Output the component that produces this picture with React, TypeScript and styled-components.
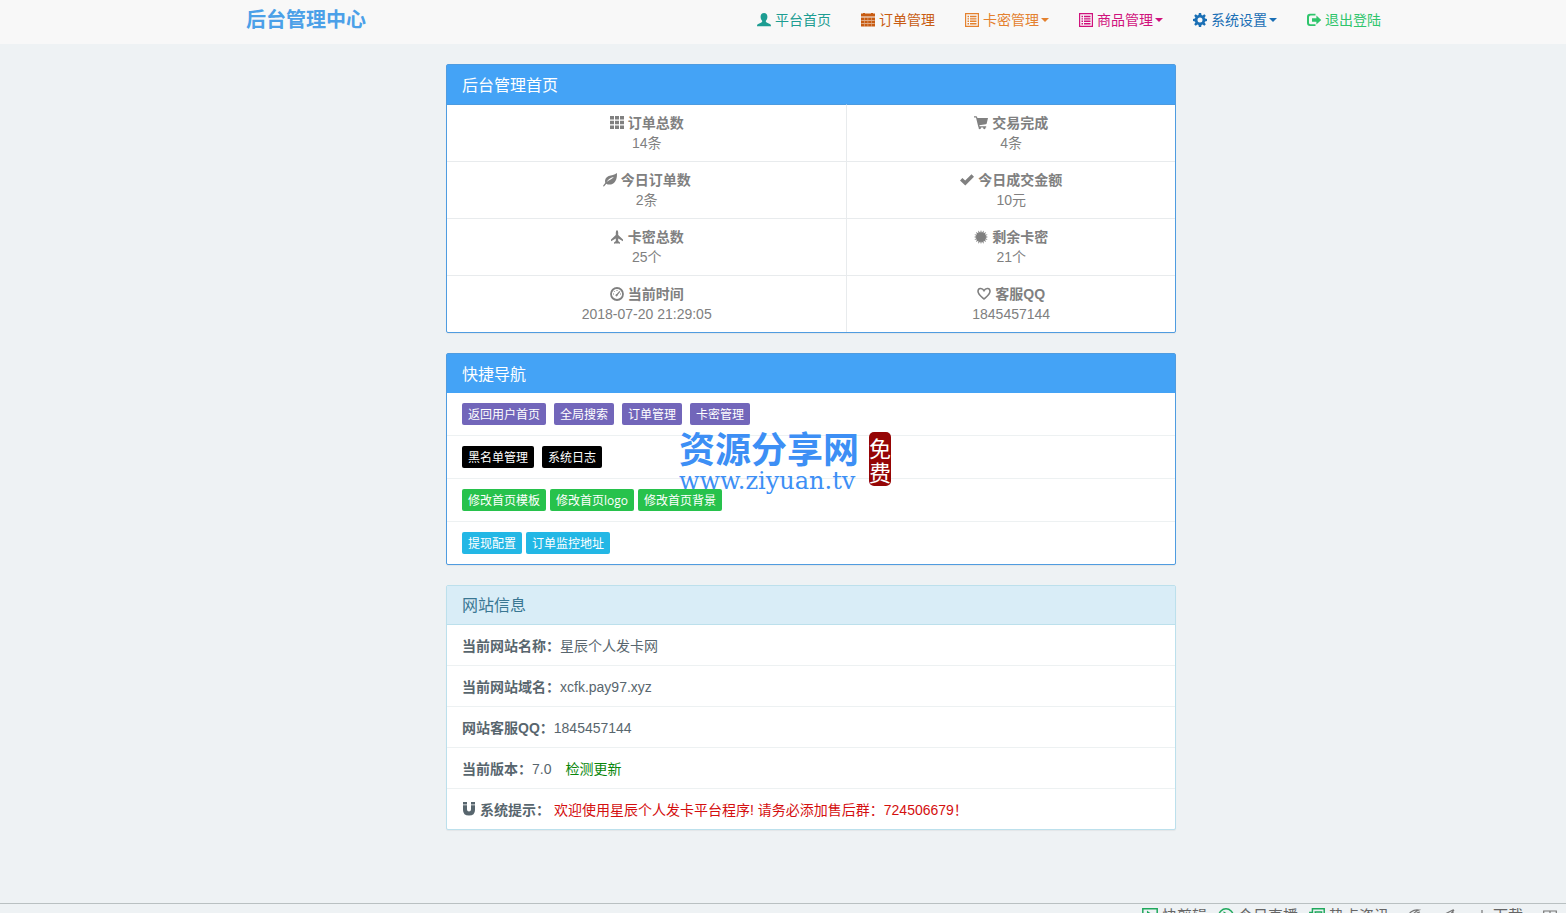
import React from "react";
import styled, { createGlobalStyle } from "styled-components";

const GlobalStyle = createGlobalStyle`
  *, *::before, *::after { box-sizing: border-box; }
  body {
    margin: 0;
    background: #eef2f4;
    color: #58666e;
    font: 14px/20px "Liberation Sans", "Noto Sans CJK SC", sans-serif;
  }
  a { text-decoration: none; }
`;

const Page = styled.div`
  display: flex;
  flex-direction: column;
  min-height: 100vh;
`;

const NavBar = styled.header`
  height: 44px;
  padding-left: 56px;
  background: #f8f8f8;
`;

const NavInner = styled.div`
  display: flex;
  justify-content: space-between;
  max-width: 1170px;
  margin: 0 auto;
  padding: 10px 0 14px 20px;
`;

const Brand = styled.a`
  color: #4ba0e8;
  font-size: 20px;
  font-weight: 700;
`;

const NavMenu = styled.nav`
  display: flex;
`;

const NavLink = styled.a<{ $color: string }>`
  display: inline-flex;
  align-items: center;
  gap: 4px;
  padding: 0 15px;
  color: ${(p) => p.$color};
`;

const NavToggle = styled.button<{ $color: string }>`
  display: inline-flex;
  align-items: center;
  gap: 4px;
  padding: 0 15px;
  border: 0;
  background: none;
  color: ${(p) => p.$color};
  font: inherit;
  cursor: pointer;

  &::after {
    content: "";
    margin-left: -2px;
    border: 4px solid transparent;
    border-top-color: currentColor;
    border-bottom: 0;
  }
`;

const Main = styled.main`
  flex: 1;
  padding: 20px 0 0 56px;
`;

const Column = styled.div`
  max-width: 730px;
  margin: 0 auto;
`;

const Panel = styled.section<{ $tone: "primary" | "info" }>`
  position: relative;
  margin-bottom: 20px;
  border: 1px solid ${(p) => (p.$tone === "primary" ? "#4f9ce0" : "#bce0ec")};
  border-radius: 2px;
  background: #fff;
  box-shadow: 0 1px 1px rgba(0, 0, 0, 0.05);
`;

const PanelTitle = styled.h3<{ $tone: "primary" | "info" }>`
  margin: 0;
  padding: ${(p) => (p.$tone === "primary" ? "12px 15px 8px" : "11px 15px 9px")};
  border-bottom: 1px solid ${(p) => (p.$tone === "primary" ? "#44a3f6" : "#bce0ec")};
  background: ${(p) => (p.$tone === "primary" ? "#44a3f6" : "#d9edf7")};
  color: ${(p) => (p.$tone === "primary" ? "#fff" : "#3a7793")};
  font-size: 16px;
  font-weight: 400;
  line-height: 18px;
`;

const StatTable = styled.table`
  width: 100%;
  border-collapse: separate;
  border-spacing: 0;
  color: #808080;
  text-align: center;

  tr:first-child td { border-top-color: #4c9be0; }
`;

const StatCell = styled.td`
  padding: 8px;
  border-top: 1px solid #e8ebed;

  &:first-child {
    width: 55%;
    border-right: 1px solid #e8ebed;
  }
`;

const StatName = styled.strong`
  display: flex;
  align-items: center;
  justify-content: center;
  gap: 4px;
`;

const List = styled.ul`
  margin: 0;
  padding: 0;
  list-style: none;
`;

const TagRow = styled.li<{ $gap: number }>`
  display: flex;
  flex-wrap: wrap;
  gap: ${(p) => p.$gap}px;
  padding: 10px 15px;

  & + & { border-top: 1px solid #edf1f2; }
`;

const Tag = styled.a<{ $color: string }>`
  padding: 2px 6px 0;
  border-radius: 2px;
  background: ${(p) => p.$color};
  color: #fff;
  font: 12px/20px "Open Sans", "Noto Sans CJK SC", sans-serif;
`;

const InfoRow = styled.li`
  padding: 11px 15px 9px;

  & + & { border-top: 1px solid #edf1f2; }
`;

const InfoName = styled.strong`
  svg { margin-right: 4px; vertical-align: -1px; }
`;

const UpdateLink = styled.a`
  margin-left: 14px;
  color: #0a860a;
`;

const Notice = styled.span`
  margin-left: 4px;
  color: #d40f0f;
`;

const Watermark = styled.div`
  position: absolute;
  top: 71px;
  left: 232px;
  display: flex;
  align-items: center;
  gap: 10px;
  color: #3d8ff5;
  pointer-events: none;
`;

const WatermarkName = styled.div`
  font: 700 36px/44px "Noto Sans CJK SC", sans-serif;
`;

const WatermarkUrl = styled.div`
  font: 24px/24px "DejaVu Serif", serif;
`;

const Seal = styled.div`
  width: 22px;
  padding: 3px 0;
  border-radius: 5px;
  background: #950505;
  color: #fff;
  font: 22px/24px "Noto Sans CJK SC", sans-serif;
`;

const StatusBar = styled.footer`
  display: flex;
  justify-content: flex-end;
  gap: 18px;
  height: 10px;
  padding-right: 9px;
  overflow: hidden;
  border-top: 1px solid #b9c0c1;
  color: #666;
  font-size: 15px;
  line-height: 24px;
`;

const StatusGroup = styled.div<{ $gap: number }>`
  display: flex;
  gap: ${(p) => p.$gap}px;
`;

const StatusItem = styled.span<{ $accent?: boolean }>`
  display: flex;
  align-items: center;
  gap: 4px;
  height: 24px;

  svg { color: ${(p) => (p.$accent ? "#1fa85c" : "#777")}; }
`;

const glyphs = {
  user: (
    <path d="M7 0C9.200 0 10.500 1.600 10.400 3.900 10.300 5.600 9.700 6.800 8.900 7.700 8.600 8.400 8.800 9 9.600 9.400L12.800 10.900C13.600 11.300 14 12 14 13.200H0C0 12 .4 11.300 1.200 10.900L4.400 9.400C5.200 9 5.400 8.400 5.100 7.700 4.300 6.800 3.700 5.600 3.600 3.900 3.500 1.600 4.800 0 7 0Z" />
  ),
  calendar: (
    <path
      fillRule="evenodd"
      d="M0 .5H2V0H4V.5H10V0H12V.5H14V3.500H0ZM0 4.500H14V13.500H0ZM3.300 4.800V13.200H3.600V4.800ZM6.800 4.800V13.200H7.100V4.800ZM10.300 4.800V13.200H10.600V4.800ZM.3 7.300V7.700H13.700V7.300ZM.3 10.300V10.700H13.700V10.300Z"
    />
  ),
  list: (
    <path
      fillRule="evenodd"
      d="M0 0H14V14H0ZM1.200 1.200V12.800H12.800V1.200ZM2.500 2.800H4V4.200H2.500ZM5 2.800H11.500V4.200H5ZM2.500 5.200H4V6.600H2.500ZM5 5.200H11.500V6.600H5ZM2.500 7.600H4V9H2.500ZM5 7.600H11.500V9H5ZM2.500 10H4V11.400H2.500ZM5 10H11.500V11.400H5Z"
    />
  ),
  cog: (
    <path
      fillRule="evenodd"
      d="M5.900 0H8.100L8.500 2 9.600 2.500 11.300 1.300 12.800 2.800 11.600 4.500 12.100 5.600 14 5.900V8.100L12.100 8.500 11.600 9.600 12.800 11.300 11.300 12.800 9.600 11.600 8.500 12.100 8.100 14H5.900L5.500 12.100 4.400 11.600 2.700 12.800 1.200 11.300 2.400 9.600 1.900 8.500 0 8.100V5.900L1.900 5.600 2.400 4.500 1.200 2.800 2.700 1.300 4.400 2.500 5.500 2ZM7 4.500A2.500 2.500 0 1 0 7 9.500 2.500 2.500 0 1 0 7 4.500Z"
    />
  ),
  logout: (
    <path d="M8.500 .8V2.600H3.600Q2 2.600 2 4.200V9.700Q2 11.300 3.600 11.300H8.500V13.100H3Q0 13.100 0 10.100V3.800Q0 .8 3 .8ZM9.400 2.600 14.200 7 9.400 11.400V8.700H5V5.300H9.400Z" />
  ),
  grid: (
    <path d="M0 0H4V3.600H0ZM5 0H9V3.600H5ZM10 0H14V3.600H10ZM0 4.700H4V8.300H0ZM5 4.700H9V8.300H5ZM10 4.700H14V8.300H10ZM0 9.400H4V13H0ZM5 9.400H9V13H5ZM10 9.400H14V13H10Z" />
  ),
  cart: (
    <path d="M0 .2H2.300Q2.800 .2 3 .8L3.400 2H14L12.700 7.600Q12.500 8.200 11.900 8.300L5.300 9.200 5.600 10.200H12.200V11.400H11.400A1.200 1.200 0 1 1 9.300 11.400H6.800A1.200 1.200 0 1 1 4.700 11.400Q4.300 11 4.200 10.500L2 1.500H0Z" />
  ),
  leaf: (
    <path
      fillRule="evenodd"
      d="M13.900 0C14.300 4.900 13 8.900 9.800 10.700 7.400 12 4.800 11.700 3.300 10.700L1.200 13.200Q.7 13.600 .3 13.200 0 12.800 .4 12.200L2.200 10C1.500 7 2.700 4.300 5.700 3 8.400 1.900 11.400 2.500 13.900 0ZM10.900 4.100C8.300 4.700 5.400 5.900 3.500 9.200 5.800 7.200 8.800 6.600 10.900 4.100Z"
    />
  ),
  check: <path d="M0 7.500 2.400 5 5.200 7.600 11.500 1.300 14 3.700 5.300 12.600Z" />,
  plane: (
    <path d="M7 0Q8.200 .8 8.200 2.400V5L13 9.400V11.200L8.200 8.600V11L10 12.500V13.800L7.600 13.200 7 14 6.400 13.200 4 13.800V12.500L5.800 11V8.600L1 11.200V9.400L5.800 5V2.400Q5.800 .8 7 0Z" />
  ),
  burst: (
    <path d="M7 0 7.900 2.700 9.700 .5 9.700 3.300 12.100 1.900 10.900 4.400 13.700 4.400 11.500 6.100 14 7 11.500 7.900 13.700 9.700 10.900 9.600 12.100 12.100 9.700 10.800 9.600 13.700 7.900 11.400 7 14 6.100 11.400 4.300 13.700 4.300 10.800 1.900 12.100 3.100 9.600 .3 9.700 2.500 7.900 0 7 2.500 6.100 .3 4.400 3.100 4.400 1.900 1.900 4.300 3.300 4.300 .5 6.100 2.700Z" />
  ),
  gauge: (
    <g fill="none" stroke="currentColor">
      <circle cx="7" cy="7" r="6" strokeWidth="1.800" />
      <path d="M6.300 8.600 9.800 4.300" strokeWidth="1.300" />
      <path d="M3 7H4M4.200 4.300 4.900 5M7 3V4M10 7H11" />
      <circle cx="6.500" cy="8.200" r=".7" />
    </g>
  ),
  heart: (
    <path
      fill="none"
      stroke="currentColor"
      strokeWidth="1.600"
      strokeLinejoin="miter"
      d="M7 12C5 10.200 1 7.400 1 4.200 1 1 5.200 .3 7 3.600 8.800 .3 13 1 13 4.200 13 7.400 9 10.200 7 12Z"
    />
  ),
  magnet: (
    <path d="M1 0H5V2.500H1ZM9 0H13V2.500H9ZM1 3.300H5V7.600Q5 9.500 7 9.500T9 7.600V3.300H13V7.900Q13 13.500 7 13.500T1 7.900Z" />
  ),
  play: (
    <g fill="none" stroke="currentColor" strokeWidth="1.300">
      <path d="M.7 .7H13.300V13.300H.7Z" />
      <path d="M5 3.500 10 7 5 10.500Z" />
    </g>
  ),
  live: (
    <g fill="none" stroke="currentColor" strokeWidth="1.300">
      <circle cx="7" cy="7" r="6.300" />
      <path d="M5.500 4 10 7 5.500 10Z" />
    </g>
  ),
  news: (
    <g fill="none" stroke="currentColor" strokeWidth="1.300">
      <path d="M3 .7H13.300V13.300H.7V4H3ZM3 4V12" />
      <path d="M5.500 3.500H11V7H5.500ZM5.500 10H11" />
    </g>
  ),
  boost: (
    <g fill="none" stroke="currentColor" strokeWidth="1.200">
      <path d="M1 9C1 4 6 0 12 1 7 3 4 6 5 12ZM5 12C5 8 8 4 13 3" />
    </g>
  ),
  mute: (
    <path fill="none" stroke="currentColor" strokeWidth="1.200" d="M1 5H4L12 1V13L4 9H1ZM3 13 13 1" />
  ),
  download: (
    <path fill="none" stroke="currentColor" strokeWidth="1.200" d="M7 1V12M3 8 7 12 11 8" />
  ),
  windows: (
    <path fill="none" stroke="currentColor" strokeWidth="1.200" d="M.7 2H13.300V13H.7ZM7 2V13M.7 7.500H13.300" />
  ),
};

type GlyphName = keyof typeof glyphs;

const IconSvg = styled.svg`
  flex: none;
  overflow: visible;
`;

function Icon({ name, size = 14 }: { name: GlyphName; size?: number }) {
  return (
    <IconSvg width={size} height={size} viewBox="0 0 14 14" fill="currentColor" aria-hidden="true">
      {glyphs[name]}
    </IconSvg>
  );
}

const navItems: { icon: GlyphName; text: string; color: string; menu?: boolean }[] = [
  { icon: "user", text: "平台首页", color: "#1d9d92" },
  { icon: "calendar", text: "订单管理", color: "#c85c12" },
  { icon: "list", text: "卡密管理", color: "#e4812f", menu: true },
  { icon: "list", text: "商品管理", color: "#d0127c", menu: true },
  { icon: "cog", text: "系统设置", color: "#1a6fb5", menu: true },
  { icon: "logout", text: "退出登陆", color: "#2fc56c" },
];

const stats: { icon: GlyphName; name: string; value: string }[][] = [
  [
    { icon: "grid", name: "订单总数", value: "14条" },
    { icon: "cart", name: "交易完成", value: "4条" },
  ],
  [
    { icon: "leaf", name: "今日订单数", value: "2条" },
    { icon: "check", name: "今日成交金额", value: "10元" },
  ],
  [
    { icon: "plane", name: "卡密总数", value: "25个" },
    { icon: "burst", name: "剩余卡密", value: "21个" },
  ],
  [
    { icon: "gauge", name: "当前时间", value: "2018-07-20 21:29:05" },
    { icon: "heart", name: "客服QQ", value: "1845457144" },
  ],
];

const shortcuts = [
  { color: "#7266ba", gap: 8, tags: ["返回用户首页", "全局搜索", "订单管理", "卡密管理"] },
  { color: "#000", gap: 8, tags: ["黑名单管理", "系统日志"] },
  { color: "#27c24c", gap: 4, tags: ["修改首页模板", "修改首页logo", "修改首页背景"] },
  { color: "#23b7e5", gap: 4, tags: ["提现配置", "订单监控地址"] },
];

export default function App() {
  return (
    <Page>
      <GlobalStyle />
      <NavBar>
        <NavInner>
          <Brand href="#">后台管理中心</Brand>
          <NavMenu>
            {navItems.map((item) =>
              item.menu ? (
                <NavToggle key={item.text} type="button" $color={item.color}>
                  <Icon name={item.icon} />
                  {item.text}
                </NavToggle>
              ) : (
                <NavLink key={item.text} href="#" $color={item.color}>
                  <Icon name={item.icon} />
                  {item.text}
                </NavLink>
              ),
            )}
          </NavMenu>
        </NavInner>
      </NavBar>

      <Main>
        <Column>
          <Panel $tone="primary">
            <PanelTitle $tone="primary">后台管理首页</PanelTitle>
            <StatTable>
              <tbody>
                {stats.map((row) => (
                  <tr key={row[0].name}>
                    {row.map((stat) => (
                      <StatCell key={stat.name}>
                        <StatName>
                          <Icon name={stat.icon} />
                          {stat.name}
                        </StatName>
                        {stat.value}
                      </StatCell>
                    ))}
                  </tr>
                ))}
              </tbody>
            </StatTable>
          </Panel>

          <Panel $tone="primary">
            <PanelTitle $tone="primary">快捷导航</PanelTitle>
            <List>
              {shortcuts.map((row) => (
                <TagRow key={row.color} $gap={row.gap}>
                  {row.tags.map((tag) => (
                    <Tag key={tag} href="#" $color={row.color}>
                      {tag}
                    </Tag>
                  ))}
                </TagRow>
              ))}
            </List>
            <Watermark>
              <div>
                <WatermarkName>资源分享网</WatermarkName>
                <WatermarkUrl>www.ziyuan.tv</WatermarkUrl>
              </div>
              <Seal>
                <div>免</div>
                <div>费</div>
              </Seal>
            </Watermark>
          </Panel>

          <Panel $tone="info">
            <PanelTitle $tone="info">网站信息</PanelTitle>
            <List>
              <InfoRow>
                <InfoName>当前网站名称：</InfoName>星辰个人发卡网
              </InfoRow>
              <InfoRow>
                <InfoName>当前网站域名：</InfoName>xcfk.pay97.xyz
              </InfoRow>
              <InfoRow>
                <InfoName>网站客服QQ：</InfoName>1845457144
              </InfoRow>
              <InfoRow>
                <InfoName>当前版本：</InfoName>7.0
                <UpdateLink href="#">检测更新</UpdateLink>
              </InfoRow>
              <InfoRow>
                <InfoName>
                  <Icon name="magnet" />
                  系统提示：
                </InfoName>
                <Notice>欢迎使用星辰个人发卡平台程序! 请务必添加售后群：724506679！</Notice>
              </InfoRow>
            </List>
          </Panel>
        </Column>
      </Main>

      <StatusBar>
        <StatusGroup $gap={11}>
          <StatusItem $accent>
            <Icon name="play" size={16} />
            快剪辑
          </StatusItem>
          <StatusItem $accent>
            <Icon name="live" size={16} />
            今日直播
          </StatusItem>
          <StatusItem $accent>
            <Icon name="news" size={16} />
            热点资讯
          </StatusItem>
        </StatusGroup>
        <StatusGroup $gap={20}>
          <StatusItem>
            <Icon name="boost" />
          </StatusItem>
          <StatusItem>
            <Icon name="mute" />
          </StatusItem>
          <StatusItem>
            <Icon name="download" />
            下载
          </StatusItem>
          <StatusItem>
            <Icon name="windows" />
          </StatusItem>
        </StatusGroup>
      </StatusBar>
    </Page>
  );
}
